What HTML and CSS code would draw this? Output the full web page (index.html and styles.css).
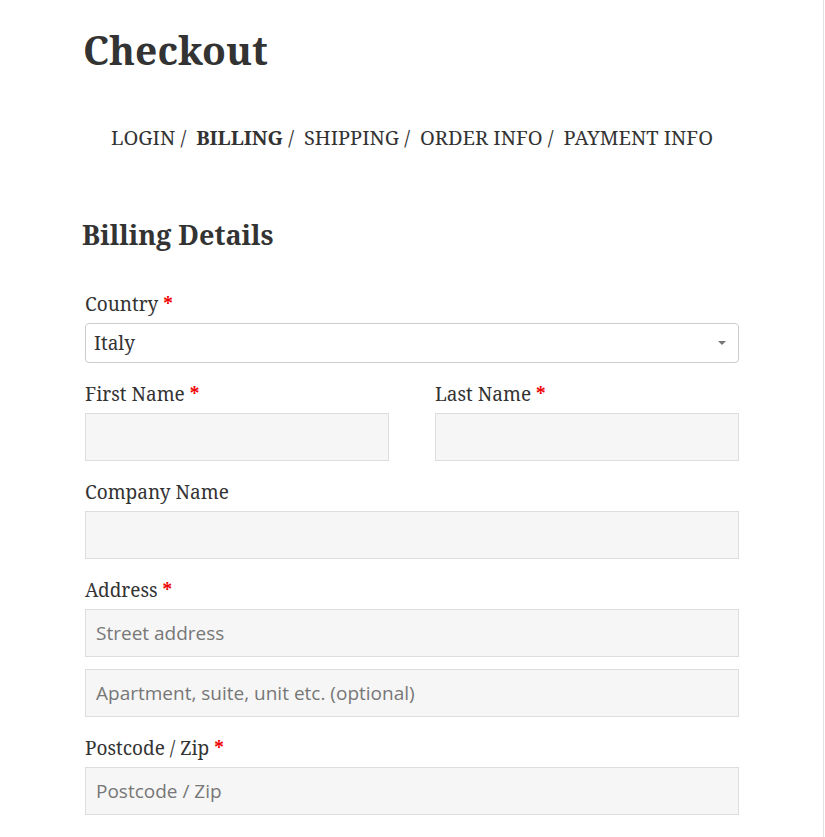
FILE: index.html
```html
<!DOCTYPE html>
<html lang="en">
<head>
<meta charset="utf-8">
<title>Checkout</title>
<link rel="stylesheet" href="styles.css">
</head>
<body>
<div class="page">
  <main class="content">
    <h1 class="title">Checkout</h1>
    <nav class="steps">
      <span class="step">LOGIN /</span>
      <span class="step"><b class="step-active">BILLING</b> /</span>
      <span class="step">SHIPPING /</span>
      <span class="step">ORDER INFO /</span>
      <span class="step">PAYMENT INFO</span>
    </nav>
    <h2 class="section-title">Billing Details</h2>
    <form class="form">
      <div class="field">
        <label class="label">Country <span class="req">*</span></label>
        <div class="select">
          <span class="select-value">Italy</span>
          <span class="select-arrow"></span>
        </div>
      </div>
      <div class="row">
        <div class="field">
          <label class="label">First Name <span class="req">*</span></label>
          <input class="input" type="text">
        </div>
        <div class="field">
          <label class="label">Last Name <span class="req">*</span></label>
          <input class="input" type="text">
        </div>
      </div>
      <div class="field">
        <label class="label">Company Name</label>
        <input class="input" type="text">
      </div>
      <div class="field">
        <label class="label">Address <span class="req">*</span></label>
        <input class="input" type="text" placeholder="Street address">
        <input class="input input-second" type="text" placeholder="Apartment, suite, unit etc. (optional)">
      </div>
      <div class="field">
        <label class="label">Postcode / Zip <span class="req">*</span></label>
        <input class="input" type="text" placeholder="Postcode / Zip">
      </div>
    </form>
  </main>
</div>
</body>
</html>
```

FILE: styles.css
```css
html, body {
  margin: 0;
  padding: 0;
  background: #fff;
}
body {
  font-family: "Noto Serif", "Droid Serif", "DejaVu Serif", serif;
  color: #333;
}
.page {
  width: 823px;
  min-height: 100vh;
  border-right: 1px solid #e2e2e2;
}
.content {
  width: 654px;
  margin-left: 85px;
  padding-top: 26px;
}
.title {
  margin: 0 0 0 -2px;
  font-size: 39px;
  line-height: 48px;
  font-weight: 700;
  color: #333;
}
.steps {
  margin-top: 50px;
  display: flex;
  justify-content: center;
  gap: 10px;
  font-size: 20px;
  line-height: 28px;
  color: #333;
}
.step {
  white-space: nowrap;
}
.step-active {
  font-weight: 700;
}
.section-title {
  margin: 66px 0 0 -3px;
  font-size: 27px;
  line-height: 34px;
  font-weight: 700;
  color: #333;
}
.form {
  margin-top: 38px;
  display: flex;
  flex-direction: column;
  gap: 17px;
}
.field {
  display: flex;
  flex-direction: column;
}
.label {
  font-size: 19px;
  line-height: 28px;
  margin-bottom: 5px;
  color: #333;
}
.req {
  color: #e00;
  font-weight: 700;
}
.select {
  height: 40px;
  box-sizing: border-box;
  border: 1px solid #ccc;
  border-radius: 4px;
  background: #fff;
  display: flex;
  align-items: center;
  justify-content: space-between;
  padding: 0 12px 0 8px;
}
.select-value {
  font-size: 19px;
  color: #333;
}
.select-arrow {
  width: 0;
  height: 0;
  border-left: 4px solid transparent;
  border-right: 4px solid transparent;
  border-top: 4px solid #777;
}
.row {
  display: grid;
  grid-template-columns: 1fr 1fr;
  column-gap: 46px;
}
.input {
  display: block;
  width: 100%;
  height: 48px;
  box-sizing: border-box;
  margin: 0;
  border: 1px solid #ddd;
  background: #f6f6f6;
  padding: 0 10px;
  font-family: "Open Sans", sans-serif;
  font-size: 19px;
  color: #333;
  outline: none;
}
.input::placeholder {
  color: #777;
}
.input-second {
  margin-top: 12px;
}
```
